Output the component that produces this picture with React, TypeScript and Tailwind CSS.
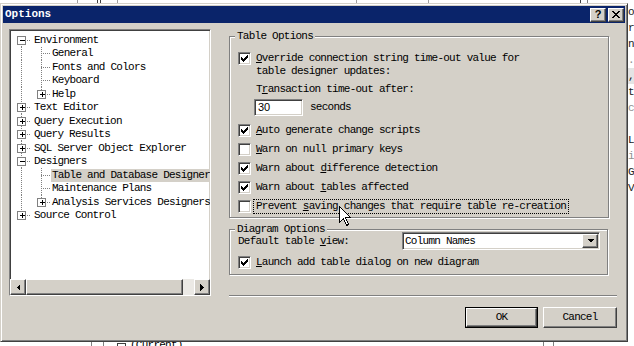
import React from 'react'

const raised =
  'border border-t-white border-l-white border-r-[#404040] border-b-[#404040] shadow-[inset_-1px_-1px_0_#808080] bg-[#d4d0c8]'
const sunken =
  'border border-t-[#808080] border-l-[#808080] border-r-white border-b-white shadow-[inset_1px_1px_0_#404040,inset_-1px_-1px_0_#d4d0c8]'
const etched = 'border border-[#808080] shadow-[inset_1px_1px_0_#fff,1px_1px_0_#fff]'

type Node = { label: string; level: 0 | 1; box?: '+' | '-'; first?: boolean; last?: boolean; sel?: boolean }

const tree: Node[] = [
  { label: 'Environment', level: 0, box: '-', first: true },
  { label: 'General', level: 1 },
  { label: 'Fonts and Colors', level: 1 },
  { label: 'Keyboard', level: 1 },
  { label: 'Help', level: 1, box: '+', last: true },
  { label: 'Text Editor', level: 0, box: '+' },
  { label: 'Query Execution', level: 0, box: '+' },
  { label: 'Query Results', level: 0, box: '+' },
  { label: 'SQL Server Object Explorer', level: 0, box: '+' },
  { label: 'Designers', level: 0, box: '-' },
  { label: 'Table and Database Designer', level: 1, sel: true },
  { label: 'Maintenance Plans', level: 1 },
  { label: 'Analysis Services Designers', level: 1, box: '+', last: true },
  { label: 'Source Control', level: 0, box: '+', last: true },
]

function Gutter({ n, h }: { n: Node; h: number }) {
  const cy = Math.floor(h / 2)
  const w = n.level === 0 ? 23 : 41
  const cx = n.level === 0 ? 11 : 31
  const dot = { stroke: '#808080', strokeWidth: 1, strokeDasharray: '1 1' }
  return (
    <svg width={w} height={h} shapeRendering="crispEdges" className="shrink-0">
      {n.level === 0 ? (
        <line x1={11.5} x2={11.5} y1={n.first ? cy : 0} y2={n.last ? cy : h} {...dot} />
      ) : (
        <>
          <line x1={11.5} x2={11.5} y1={0} y2={h} {...dot} />
          <line x1={31.5} x2={31.5} y1={0} y2={n.last ? cy : h} {...dot} />
        </>
      )}
      <line x1={cx} x2={cx + 10} y1={cy + 0.5} y2={cy + 0.5} {...dot} />
      {n.box && (
        <g>
          <rect x={cx - 3.5} y={cy - 3.5} width={8} height={8} fill="#fff" stroke="#808080" />
          <rect x={cx - 1} y={cy} width={5} height={1} fill="#000" />
          {n.box === '+' && <rect x={cx + 1} y={cy - 2} width={1} height={5} fill="#000" />}
        </g>
      )}
    </svg>
  )
}

function Check({ on }: { on: boolean }) {
  const ys = [2, 3, 4, 3, 2, 1, 0]
  return (
    <span className={`flex h-[13px] w-[13px] shrink-0 items-center justify-center bg-white ${sunken}`}>
      {on && (
        <svg width="7" height="7" shapeRendering="crispEdges">
          {ys.map((y, i) => (
            <rect key={i} x={i} y={y} width={1} height={3} fill="#000" />
          ))}
        </svg>
      )}
    </span>
  )
}

function CheckRow({ on, focus, children }: { on: boolean; focus?: boolean; children: React.ReactNode }) {
  return (
    <div className="flex h-[19px] items-center">
      <Check on={on} />
      <span
        className={`ml-[2px] border px-[2px] leading-[13px] whitespace-nowrap ${
          focus ? 'border-dotted border-black' : 'border-transparent'
        }`}
      >
        {children}
      </span>
    </div>
  )
}

function Arrow({ dir }: { dir: 'left' | 'right' | 'down' }) {
  const pts = dir === 'left' ? '4,0 4,7 0.5,3.5' : dir === 'right' ? '0,0 0,7 3.5,3.5' : '0,0 7,0 3.5,3.5'
  const size = dir === 'down' ? { width: 7, height: 4 } : { width: 4, height: 7 }
  return (
    <svg {...size} shapeRendering="crispEdges">
      <polygon points={pts} fill="#000" />
    </svg>
  )
}

const closeRows = ['XX....XX', '.XX..XX.', '..XXXX..', '...XX...', '..XXXX..', '.XX..XX.', 'XX....XX']

export default function App() {
  return (
    <div className="relative flex h-[346px] w-[634px] flex-col overflow-hidden bg-white font-['Liberation_Mono',monospace] text-[11px] tracking-[-0.75px] text-black">
      {/* background window behind the dialog, top edge */}
      <svg width="634" height="3" shapeRendering="crispEdges" className="shrink-0">
        <rect x="77" y="0" width="1" height="3" fill="#a0a0a0" />
        <rect x="97" y="0" width="1" height="3" fill="#404040" />
        <rect x="100" y="0" width="1" height="3" fill="#404040" />
        <rect x="117" y="0" width="1" height="3" fill="#a0a0a0" />
        <rect x="356" y="0" width="1" height="3" fill="#a0a0a0" />
        <rect x="428" y="0" width="1" height="3" fill="#a0a0a0" />
        <rect x="580" y="0" width="1" height="3" fill="#404040" />
        <rect x="587" y="0" width="1" height="3" fill="#808080" />
      </svg>

      <div className="flex h-[339px] shrink-0">
        {/* dialog */}
        <div className="flex h-[339px] w-[628px] shrink-0 flex-col border border-[#d4d0c8] border-r-[#404040] border-b-[#404040] bg-[#d4d0c8] p-[2px] shadow-[inset_1px_1px_0_#fff,inset_-1px_-1px_0_#808080]">
          <div className="flex h-[17px] shrink-0 items-center justify-between bg-[#0a246a] pr-[1px] pl-[2px]">
            <span className="font-bold tracking-normal text-white">Options</span>
            <div className="flex gap-[2px]">
              <span className={`flex h-[14px] w-[16px] items-center justify-center font-['Liberation_Sans',sans-serif] text-[11px] leading-none font-bold tracking-normal ${raised}`}>
                ?
              </span>
              <span className={`flex h-[14px] w-[16px] items-center justify-center ${raised}`}>
                <svg width="8" height="7" shapeRendering="crispEdges">
                  {closeRows.map((r, y) =>
                    r.split('').map((c, x) => (c === 'X' ? <rect key={`${x}-${y}`} x={x} y={y} width={1} height={1} fill="#000" /> : null))
                  )}
                </svg>
              </span>
            </div>
          </div>

          <div className="flex flex-1 pt-[6px] pl-[6px]">
            {/* tree */}
            <div className={`flex h-[267px] w-[202px] shrink-0 flex-col bg-white ${sunken}`}>
              <div className="flex-1 overflow-hidden pt-[3px]">
                {tree.map((n, i) => {
                  const h = i % 2 === 0 ? 14 : 13
                  return (
                    <div key={n.label} className={`flex items-center ${h === 14 ? 'h-[14px]' : 'h-[13px]'}`}>
                      <Gutter n={n} h={h} />
                      <span className={`pr-[2px] pl-[1px] leading-[13px] whitespace-nowrap ${n.sel ? 'bg-[#d4d0c8]' : ''}`}>
                        {n.label}
                      </span>
                    </div>
                  )
                })}
              </div>
              <div className="flex h-[16px] shrink-0 bg-[#ebe9e5]">
                <span className={`flex h-[16px] w-[16px] items-center justify-center ${raised}`}>
                  <Arrow dir="left" />
                </span>
                <span className={`h-[16px] w-[157px] ${raised}`} />
                <span className="flex-1" />
                <span className={`flex h-[16px] w-[16px] items-center justify-center ${raised}`}>
                  <Arrow dir="right" />
                </span>
              </div>
            </div>

            {/* options */}
            <div className="ml-[18px] flex w-[388px] flex-col pt-[7px]">
              <div className={`relative w-[380px] pt-[15px] pb-[1px] pl-[8px] ${etched}`}>
                <span className="absolute -top-[7px] left-[5px] bg-[#d4d0c8] px-[2px] leading-[13px]">Table Options</span>
                <div className="flex items-start">
                  <Check on />
                  <span className="ml-[5px] leading-[13px]">
                    <u>O</u>verride connection string time-out value for
                    <br />
                    table designer updates:
                  </span>
                </div>
                <div className="mt-[5px] ml-[18px] leading-[13px]">
                  T<u>r</u>ansaction time-out after:
                </div>
                <div className="mt-[3px] ml-[16px] flex items-center">
                  <span className={`flex h-[17px] w-[49px] items-center bg-white pl-[3px] font-['Liberation_Sans',sans-serif] text-[11px] tracking-normal ${sunken}`}>
                    30
                  </span>
                  <span className="ml-[7px] leading-[13px]">seconds</span>
                </div>
                <div className="mt-[5px]">
                  <CheckRow on>
                    <u>A</u>uto generate change scripts
                  </CheckRow>
                  <CheckRow on={false}>
                    <u>W</u>arn on null primary keys
                  </CheckRow>
                  <CheckRow on>
                    Warn about <u>d</u>ifference detection
                  </CheckRow>
                  <CheckRow on>
                    Warn about <u>t</u>ables affected
                  </CheckRow>
                  <CheckRow on={false} focus>
                    Prevent <u>s</u>aving changes that require table re-creation
                  </CheckRow>
                </div>
              </div>

              <div className={`relative mt-[11px] w-[379px] pt-[2px] pb-[2px] pl-[8px] ${etched}`}>
                <span className="absolute -top-[7px] left-[5px] bg-[#d4d0c8] px-[2px] leading-[13px]">Diagram Options</span>
                <div className="flex h-[18px] items-center">
                  <span className="w-[164px] leading-[13px]">
                    Default table <u>v</u>iew:
                  </span>
                  <div className={`flex h-[18px] w-[198px] items-center justify-between bg-white pr-[1px] pl-[2px] ${sunken}`}>
                    <span className="leading-[13px]">Column Names</span>
                    <span className={`flex h-[14px] w-[16px] items-center justify-center ${raised}`}>
                      <Arrow dir="down" />
                    </span>
                  </div>
                </div>
                <div className="mt-[3px]">
                  <CheckRow on>
                    <u>L</u>aunch add table dialog on new diagram
                  </CheckRow>
                </div>
              </div>

              <div className="mt-[20px] h-[2px] w-[388px] border-t border-b border-t-[#808080] border-b-white" />

              <div className="mt-[10px] flex justify-end gap-[5px]">
                <div className="h-[21px] w-[73px] border border-black">
                  <span className={`flex h-full w-full items-center justify-center leading-[13px] ${raised}`}>OK</span>
                </div>
                <span className={`flex h-[21px] w-[74px] items-center justify-center leading-[13px] ${raised}`}>Cancel</span>
              </div>
            </div>
          </div>
        </div>

        {/* background window, right edge */}
        <div className="flex w-[6px] shrink-0 flex-col overflow-hidden pt-[1px] leading-[16px] text-[#202020]">
          <span>o</span>
          <span>r</span>
          <span>n</span>
          <span className="text-[#909090]">.</span>
          <span className="bg-[#e4e4e4]">,</span>
          <span>t</span>
          <span className="text-[#909090]">c</span>
          <span>&nbsp;</span>
          <span>L</span>
          <span className="text-[#909090]">i</span>
          <span>G</span>
          <span>V</span>
        </div>
      </div>

      {/* background window, bottom edge */}
      <div className="flex h-[4px] shrink-0 overflow-hidden">
        <span className="w-[91px] shrink-0" />
        <span className="w-px shrink-0 bg-[#808080]" />
        <span className="w-[11px] shrink-0" />
        <span className="w-px shrink-0 bg-[#808080]" />
        <span className="w-[13px] shrink-0" />
        <span className="mt-[1px] h-[9px] w-[9px] shrink-0 border border-[#404040]" />
        <span className="-mt-[3px] ml-[4px] shrink-0 leading-[13px]">(Current)</span>
        <span className="w-[360px] shrink-0" />
        <span className="w-px shrink-0 bg-[#808080]" />
        <span className="w-[9px] shrink-0" />
        <span className="w-px shrink-0 bg-[#808080]" />
      </div>

      {/* mouse pointer */}
      <svg width="13" height="21" className="absolute top-[206px] left-[339px]" shapeRendering="crispEdges">
        <path d="M0.5 0.5 V16.5 L4.5 12.5 L7.5 19.5 L9.5 18.5 L6.5 11.5 H11.5 Z" fill="#fff" stroke="#000" />
      </svg>
    </div>
  )
}
